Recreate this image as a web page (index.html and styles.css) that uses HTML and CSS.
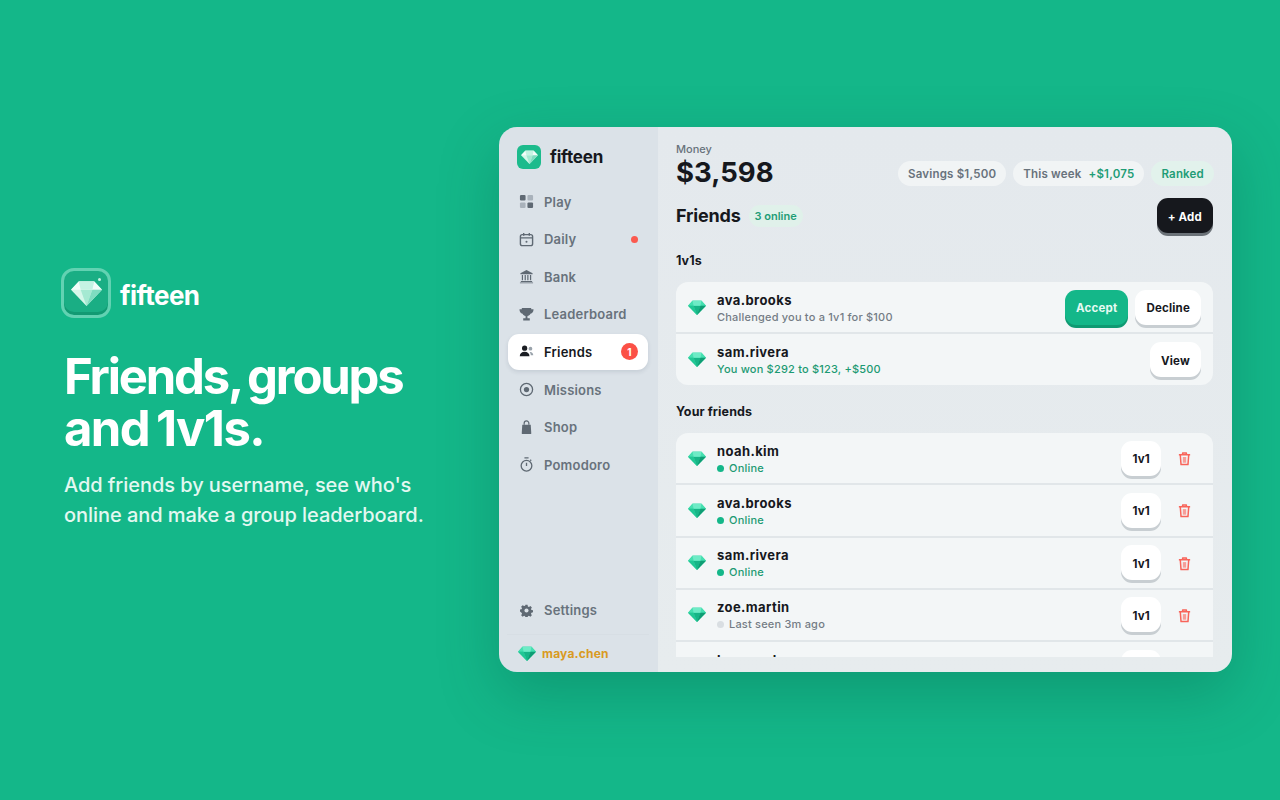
FILE: index.html
```html
<!DOCTYPE html>
<html lang="en">
<head>
<meta charset="UTF-8" />
<title>fifteen - Friends, groups and 1v1s</title>
<link rel="stylesheet" href="styles.css">
</head>
<body>
<svg class="defs" width="0" height="0" aria-hidden="true">
  <defs>
    <symbol id="gem" viewBox="0 0 24 20">
      <path d="M6 1h12l6 6.500L12 20 0 7.500z" fill="#2fd6a0"/>
      <path d="M6 1h12l6 6.500H0z" fill="#45dfb0"/>
      <path d="M7.500 7.500h9L12 20z" fill="#17b587"/>
      <path d="M0 7.500h7.500L12 20z" fill="#22c795"/>
      <path d="M16.500 7.500H24L12 20z" fill="#0f9d74"/>
      <path d="M6 1l1.500 6.500h9L18 1z" fill="#6eebc6"/>
    </symbol>
    <symbol id="gem-white" viewBox="0 0 24 20">
      <path d="M6 1h12l6 6.500L12 20 0 7.500z" fill="#d6f7ea"/>
      <path d="M6 1h12l6 6.500H0z" fill="#f3fdf9"/>
      <path d="M7.500 7.500h9L12 20z" fill="#a5e9d2"/>
      <path d="M16.500 7.500H24L12 20z" fill="#7fdcc0"/>
      <path d="M6 1l1.500 6.500h9L18 1z" fill="#c5f3e3"/>
    </symbol>
    <symbol id="trash" viewBox="0 0 16 16">
      <path d="M2 4h12M6 4V2h4v2M3.500 4l.8 10.500h7.400l.8-10.500" fill="none" stroke="currentColor" stroke-width="1.600" stroke-linejoin="round"/>
      <path d="M6.200 6.500h3.600v6H6.200z" fill="currentColor" opacity=".6"/>
    </symbol>
  </defs>
</svg>

<section class="intro">
  <div class="brand">
    <div class="brand-mark"><svg class="brand-gem"><use href="#gem-white"/></svg><span class="brand-spark"></span></div>
    <span class="brand-name">fifteen</span>
  </div>
  <h1>Friends, groups<br><span class="h1-second">and 1v1s.</span></h1>
  <p>Add friends by username, see who's<br>online and make a group leaderboard.</p>
</section>

<div class="window">
  <aside class="sidebar">
    <div class="logo">
      <div class="logo-mark"><svg class="logo-gem"><use href="#gem-white"/></svg></div>
      <span class="logo-name">fifteen</span>
    </div>
    <nav class="nav">
      <a class="nav-item">
        <svg class="nav-icon" viewBox="0 0 16 16"><rect x="1" y="1" width="6" height="6" rx="1.200" fill="#5f6973"/><rect x="9" y="1" width="6" height="6" rx="1.200" fill="#a9b2bb"/><rect x="1" y="9" width="6" height="6" rx="1.200" fill="#a9b2bb"/><rect x="9" y="9" width="6" height="6" rx="1.200" fill="#5f6973"/></svg>
        Play
      </a>
      <a class="nav-item">
        <svg class="nav-icon" viewBox="0 0 16 16" fill="none" stroke="#5f6973" stroke-width="1.500"><rect x="1.500" y="2.800" width="13" height="11.700" rx="2"/><path d="M1.500 6.300h13M5 1v3M11 1v3"/><circle cx="8" cy="10.300" r="1.100" fill="#5f6973" stroke="none"/></svg>
        Daily
        <span class="dot"></span>
      </a>
      <a class="nav-item">
        <svg class="nav-icon" viewBox="0 0 16 16" fill="#5f6973"><path d="M8 1l6.500 3.500v1h-13v-1z"/><path d="M3 6.500h1.300v5.500H3zM6 6.500h1.300v5.500H6zM8.800 6.500h1.300v5.500H8.800zM11.700 6.500H13v5.500h-1.300z"/><path d="M2 12.800h12v1H2zM1 14.300h14v1H1z"/></svg>
        Bank
      </a>
      <a class="nav-item">
        <svg class="nav-icon" viewBox="0 0 16 16" fill="#5f6973"><path d="M3 1h10v1.500h2.500c0 2.800-1.200 4.300-3.300 4.600C11.500 8.500 10.300 9.300 9 9.500V12h2.500v2.500h-7V12H7V9.500c-1.300-.2-2.500-1-3.200-2.400C1.700 6.800.5 5.300.5 2.500H3z"/></svg>
        Leaderboard
      </a>
      <a class="nav-item active">
        <svg class="nav-icon" viewBox="0 0 16 16"><circle cx="6" cy="4.500" r="2.800" fill="#1b1e23"/><path d="M.8 13c0-3 2.300-4.800 5.200-4.800s5.200 1.800 5.200 4.800z" fill="#1b1e23"/><circle cx="12.200" cy="5" r="2" fill="#9aa3ab"/><path d="M12 8.500c1.900 0 3.200 1.400 3.200 3.500h-2.600c0-1.300-.4-2.400-1.200-3.300z" fill="#9aa3ab"/></svg>
        Friends
        <span class="badge">1</span>
      </a>
      <a class="nav-item">
        <svg class="nav-icon" viewBox="0 0 16 16"><circle cx="8" cy="8" r="6.500" fill="none" stroke="#5f6973" stroke-width="1.400"/><circle cx="8" cy="8" r="2.800" fill="#5f6973"/></svg>
        Missions
      </a>
      <a class="nav-item">
        <svg class="nav-icon" viewBox="0 0 16 16"><path d="M5.500 5V3.500a2.500 2.500 0 0 1 5 0V5" fill="none" stroke="#5f6973" stroke-width="1.300"/><path d="M3.500 5h9l.6 9a1 1 0 0 1-1 1H3.900a1 1 0 0 1-1-1z" fill="#5f6973"/></svg>
        Shop
      </a>
      <a class="nav-item">
        <svg class="nav-icon" viewBox="0 0 16 16" fill="none" stroke="#5f6973" stroke-width="1.400"><circle cx="8" cy="9.300" r="5.700"/><path d="M5.800 1h4.400M8 6v3.500M13 3l-1 1"/></svg>
        Pomodoro
      </a>
    </nav>
    <a class="nav-item settings">
      <svg class="nav-icon gear" viewBox="0 0 16 16"><path d="M6.700 1h2.600l.4 2 1.300.6 1.800-1.100 1.800 1.800-1.100 1.800.6 1.300 1.900.4v2.500l-1.900.4-.6 1.300 1.100 1.800-1.800 1.800-1.800-1.100-1.300.6-.4 1.900H6.700l-.4-1.900-1.300-.6-1.800 1.100-1.800-1.800 1.100-1.800-.6-1.300L0 9.300V6.800l1.900-.4.600-1.300-1.100-1.800 1.800-1.800 1.800 1.100 1.300-.6z" fill="#5f6973"/><circle cx="8" cy="8" r="2.500" fill="#dbe2e8"/></svg>
      Settings
    </a>
    <div class="me">
      <svg class="me-gem"><use href="#gem"/></svg>
      <span>maya.chen</span>
    </div>
  </aside>

  <main class="main">
    <header class="topbar">
      <div>
        <div class="money-label">Money</div>
        <div class="money">$3,598</div>
      </div>
      <div class="chips">
        <span class="chip">Savings $1,500</span>
        <span class="chip">This week <b>+$1,075</b></span>
        <span class="chip chip-green">Ranked</span>
      </div>
    </header>

    <div class="title-row">
      <h2>Friends</h2>
      <span class="online">3 online</span>
      <button class="btn btn-dark">+ Add</button>
    </div>

    <h3 class="first">1v1s</h3>
    <div class="card">
      <div class="row">
        <svg class="gem"><use href="#gem"/></svg>
        <div class="who">
          <div class="name">ava.brooks</div>
          <div class="sub">Challenged you to a 1v1 for $100</div>
        </div>
        <button class="btn btn-green">Accept</button>
        <button class="btn">Decline</button>
      </div>
      <div class="row">
        <svg class="gem"><use href="#gem"/></svg>
        <div class="who">
          <div class="name">sam.rivera</div>
          <div class="sub won">You won $292 to $123, +$500</div>
        </div>
        <button class="btn">View</button>
      </div>
    </div>

    <h3>Your friends</h3>
    <div class="list">
      <div class="card">
        <div class="row">
          <svg class="gem"><use href="#gem"/></svg>
          <div class="who">
            <div class="name">noah.kim</div>
            <div class="sub on"><i class="status"></i>Online</div>
          </div>
          <button class="btn">1v1</button>
          <svg class="trash"><use href="#trash"/></svg>
        </div>
        <div class="row">
          <svg class="gem"><use href="#gem"/></svg>
          <div class="who">
            <div class="name">ava.brooks</div>
            <div class="sub on"><i class="status"></i>Online</div>
          </div>
          <button class="btn">1v1</button>
          <svg class="trash"><use href="#trash"/></svg>
        </div>
        <div class="row">
          <svg class="gem"><use href="#gem"/></svg>
          <div class="who">
            <div class="name">sam.rivera</div>
            <div class="sub on"><i class="status"></i>Online</div>
          </div>
          <button class="btn">1v1</button>
          <svg class="trash"><use href="#trash"/></svg>
        </div>
        <div class="row">
          <svg class="gem"><use href="#gem"/></svg>
          <div class="who">
            <div class="name">zoe.martin</div>
            <div class="sub"><i class="status off"></i>Last seen 3m ago</div>
          </div>
          <button class="btn">1v1</button>
          <svg class="trash"><use href="#trash"/></svg>
        </div>
        <div class="row">
          <svg class="gem"><use href="#gem"/></svg>
          <div class="who">
            <div class="name">lena.park</div>
            <div class="sub"><i class="status off"></i>Last seen 1h ago</div>
          </div>
          <button class="btn">1v1</button>
          <svg class="trash"><use href="#trash"/></svg>
        </div>
      </div>
    </div>
  </main>
</div>
</body>
</html>
```

FILE: styles.css
```css
* {
  box-sizing: border-box;
}
html, body {
  height: 100%;
}
body {
  margin: 0;
  height: 800px;
  overflow: hidden;
  background: #14b789;
  font-family: Inter, "Noto Sans", sans-serif;
  color: #16181d;
  display: flex;
  align-items: center;
}
.defs {
  position: absolute;
}

/* left side */
.intro {
  width: 499px;
  padding: 0 0 2px 61px;
  color: #fff;
}
.brand {
  display: flex;
  align-items: center;
  gap: 9px;
}
.brand-mark {
  position: relative;
  width: 50px;
  height: 50px;
  border: 3px solid #62d2b2;
  border-radius: 13px;
  background: #1aae84;
  box-shadow: inset 0 -3px 0 #129a73;
  display: flex;
  align-items: center;
  justify-content: center;
}
.brand-gem {
  width: 31px;
  height: 26px;
}
.brand-spark {
  position: absolute;
  top: 7px;
  right: 7px;
  width: 3px;
  height: 3px;
  border-radius: 50%;
  background: #c5f3e3;
}
.brand-name {
  font-size: 26px;
  font-weight: 700;
  letter-spacing: -0.55px;
  padding-top: 4px;
}
.intro h1 {
  margin: 33px 0 0 3px;
  font-size: 49px;
  line-height: 52px;
  font-weight: 700;
  letter-spacing: -2.2px;
  word-spacing: -3px;
}
.h1-second {
  letter-spacing: -1.6px;
}
.intro p {
  margin: 15px 0 0 3px;
  font-size: 20px;
  line-height: 30px;
  font-weight: 500;
  letter-spacing: -0.06px;
  color: #e3f8f1;
}

/* app window */
.window {
  width: 733px;
  height: 545px;
  margin-top: -1px;
  border-radius: 18px;
  overflow: hidden;
  display: flex;
  box-shadow: 0 22px 60px rgba(0, 80, 60, 0.28);
}
.sidebar {
  width: 159px;
  flex-shrink: 0;
  background: #dbe2e8;
  padding: 18px 10px 0 9px;
  display: flex;
  flex-direction: column;
}
.logo {
  display: flex;
  align-items: center;
  gap: 9px;
  padding-left: 9px;
  margin-bottom: 14.600px;
}
.logo-mark {
  width: 24px;
  height: 24px;
  border-radius: 6px;
  background: #1cbb8c;
  display: flex;
  align-items: center;
  justify-content: center;
}
.logo-gem {
  width: 17px;
  height: 14px;
}
.logo-name {
  font-size: 17px;
  font-weight: 700;
  letter-spacing: -0.2px;
}
.nav {
  display: flex;
  flex-direction: column;
  gap: 1.6px;
}
.nav-item {
  height: 36px;
  display: flex;
  align-items: center;
  gap: 10px;
  padding: 0 10px 0 11px;
  border-radius: 11px;
  font-size: 13px;
  font-weight: 600;
  letter-spacing: 0.2px;
  color: #68727c;
}
.nav-icon {
  width: 15px;
  height: 15px;
  flex-shrink: 0;
}
.nav-icon.gear {
  width: 13px;
  height: 13px;
  margin: 0 1px;
}
.nav-item.active {
  background: #fff;
  color: #16181d;
  box-shadow: 0 2px 4px rgba(40, 60, 80, 0.12);
}
.dot {
  width: 7px;
  height: 7px;
  border-radius: 50%;
  background: #fb5a4f;
  margin-left: auto;
}
.badge {
  width: 17px;
  height: 17px;
  border-radius: 50%;
  background: #fb5046;
  color: #fff;
  font-size: 10px;
  font-weight: 700;
  margin-left: auto;
  display: flex;
  align-items: center;
  justify-content: center;
}
.settings {
  margin-top: auto;
  margin-bottom: 6px;
}
.me {
  height: 38px;
  margin: 0 -1px;
  padding: 0 0 1px 11px;
  border-top: 1px solid #d7dee4;
  display: flex;
  align-items: center;
  gap: 6px;
  font-size: 12px;
  font-weight: 700;
  letter-spacing: 0.2px;
  color: #d99a22;
}
.me-gem {
  width: 18px;
  height: 15px;
}

.main {
  flex: 1;
  min-width: 0;
  background: linear-gradient(180deg, #e4e9ed, #e7ecee);
  padding: 16px 19px 15px 18px;
  display: flex;
  flex-direction: column;
}
.topbar {
  display: flex;
  justify-content: space-between;
  align-items: flex-end;
}
.money-label {
  font-size: 11px;
  line-height: 13px;
  font-weight: 500;
  color: #68727c;
}
.money {
  font-size: 27.500px;
  line-height: 33px;
  font-weight: 700;
}
.chips {
  display: flex;
  gap: 7px;
  margin: 0 -1px 3px 0;
}
.chip {
  height: 25px;
  padding: 0 10px;
  border-radius: 13px;
  background: #f1f4f5;
  font-size: 11.500px;
  font-weight: 600;
  letter-spacing: 0.2px;
  color: #68727c;
  display: flex;
  align-items: center;
  gap: 7px;
}
.chip b {
  font-weight: 600;
  color: #1f9d76;
}
.chip-green {
  background: #e2f2ec;
  color: #1f9d76;
}
.title-row {
  display: flex;
  align-items: center;
  gap: 8px;
  margin-top: 9px;
}
.title-row h2 {
  margin: 0;
  font-size: 18px;
  font-weight: 700;
  letter-spacing: -0.2px;
}
.online {
  height: 22px;
  padding: 0 6px;
  border-radius: 11px;
  background: #e0f1ea;
  color: #1f9d76;
  font-size: 11px;
  font-weight: 600;
  display: flex;
  align-items: center;
}
h3 {
  margin: 19px 0 14px;
  font-size: 12.500px;
  line-height: 15px;
  font-weight: 700;
  letter-spacing: 0.1px;
}
h3.first {
  margin-top: 20px;
}
.card {
  background: #f3f6f7;
  border-radius: 12px;
  overflow: hidden;
}
.row {
  height: 52.200px;
  display: flex;
  align-items: center;
  gap: 7px;
  padding: 0 12px;
  border-bottom: 2px solid #e1e6e9;
}
.row:last-child {
  border-bottom: 0;
  height: 51px;
}
.gem {
  width: 18px;
  height: 15px;
  flex-shrink: 0;
  margin-right: 4px;
}
.who {
  flex: 1;
  min-width: 0;
  padding-top: 2px;
}
.name {
  font-size: 13px;
  line-height: 16px;
  font-weight: 700;
  letter-spacing: 0.4px;
}
.sub {
  margin-top: 2px;
  font-size: 11px;
  line-height: 15px;
  font-weight: 500;
  letter-spacing: 0.2px;
  color: #737c85;
  display: flex;
  align-items: center;
}
.sub.won,
.sub.on {
  color: #1c9a73;
}
.status {
  width: 7px;
  height: 7px;
  border-radius: 50%;
  background: #14b789;
  margin-right: 5px;
}
.status.off {
  background: #d9dee2;
}
.btn {
  height: 35px;
  padding: 2px 11px 0;
  border: 0;
  border-radius: 11px;
  background: #fff;
  box-shadow: 0 3px 0 #c8ced2;
  color: #16181d;
  font-family: inherit;
  font-size: 11.500px;
  font-weight: 700;
  letter-spacing: 0.2px;
  flex-shrink: 0;
}
.btn-green {
  background: #14b789;
  color: #e6faf3;
  box-shadow: 0 3px 0 #0f9a72;
}
.btn-dark {
  margin-left: auto;
  background: #16181d;
  color: #fff;
  box-shadow: 0 3px 0 #6b7278;
}
.list {
  flex: 1;
  min-height: 0;
  overflow: hidden;
}
.trash {
  width: 15px;
  height: 15px;
  margin: 1px 9px 0 9px;
  color: #f8645a;
  flex-shrink: 0;
}
```
